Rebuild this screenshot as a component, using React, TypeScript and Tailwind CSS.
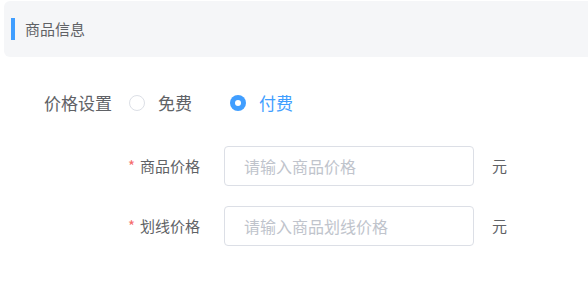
import React, { useState } from 'react';

const font = { fontFamily: '"Noto Sans CJK SC", "Noto Sans", sans-serif' };

function Radio({ checked, label, onClick }: { checked: boolean; label: string; onClick: () => void }) {
  return (
    <button onClick={onClick} className="flex items-center gap-[13px]">
      {checked ? (
        <span className="flex h-[16px] w-[16px] items-center justify-center rounded-full bg-[#409eff]">
          <span className="h-[6px] w-[6px] rounded-full bg-white" />
        </span>
      ) : (
        <span className="h-[16px] w-[16px] rounded-full border border-[#dcdfe6] bg-white" />
      )}
      <span className={`text-[17px] ${checked ? 'text-[#409eff]' : 'text-[#606266]'}`}>{label}</span>
    </button>
  );
}

function PriceRow({ label, placeholder }: { label: string; placeholder: string }) {
  return (
    <div className="flex items-center">
      <label className="flex w-[200px] items-center justify-end text-[15px] text-[#606266]">
        <span className="mr-[5px] text-[#f56c6c]">*</span>
        {label}
      </label>
      <input
        placeholder={placeholder}
        className="ml-[24px] h-[40px] w-[250px] rounded-[4px] border border-[#dcdfe6] bg-white pl-[19px] text-[16px] text-[#606266] outline-none placeholder:text-[#c0c4cc]"
      />
      <span className="ml-[18px] text-[15px] text-[#606266]">元</span>
    </div>
  );
}

export default function App() {
  const [paid, setPaid] = useState(true);

  return (
    <div className="h-[283px] w-[588px] bg-white pt-[1px]" style={font}>
      <div className="ml-[4px] flex h-[56px] items-center rounded-l-[6px] bg-[#f5f6f8] pl-[7px]">
        <span className="h-[22px] w-[4px] bg-[#409eff]" />
        <span className="ml-[10px] text-[15px] text-[#606266]">商品信息</span>
      </div>

      <div className="mt-[30px] flex h-[32px] items-center pl-[44px]">
        <span className="text-[17px] text-[#606266]">价格设置</span>
        <div className="ml-[17px] flex items-center gap-[38px]">
          <Radio checked={!paid} label="免费" onClick={() => setPaid(false)} />
          <Radio checked={paid} label="付费" onClick={() => setPaid(true)} />
        </div>
      </div>

      <div className="mt-[27px] flex flex-col gap-[20px]">
        <PriceRow label="商品价格" placeholder="请输入商品价格" />
        <PriceRow label="划线价格" placeholder="请输入商品划线价格" />
      </div>
    </div>
  );
}
